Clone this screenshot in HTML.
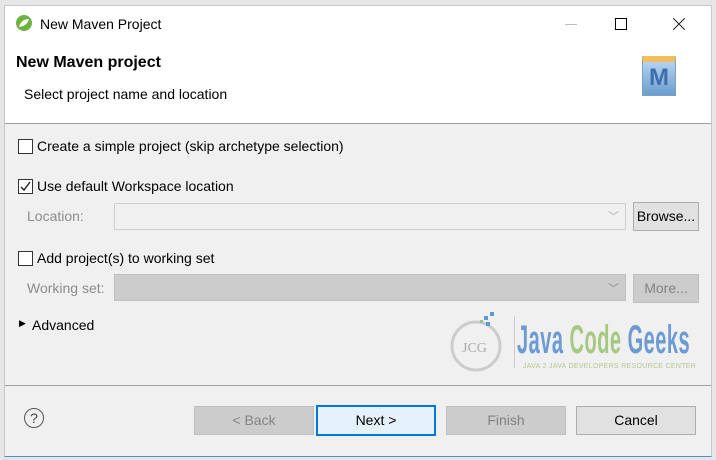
<!DOCTYPE html><html><head><style>
body{margin:0;width:716px;height:460px;background:#e6e6e6;position:relative;overflow:hidden;font-family:"Liberation Sans",sans-serif;font-size:14px;color:#000}
.win{position:absolute;left:4px;top:5px;width:706px;height:450px;background:#f0f0f0;border:1px solid #4a90d9;border-top-color:#c8c8c8;border-left-color:#c8c8c8;border-right-color:#c8c8c8}
.a{position:absolute}
.cb{position:absolute;width:13px;height:13px;border:1px solid #333;background:#fff}
.btn{position:absolute;height:27px;border:1px solid #adadad;background:#e1e1e1;text-align:center;line-height:27px;font-size:14px}
.dis{background:#ccc;border-color:#bfbfbf;color:#838383}
</style></head><body>
<div class="win">
<div class="a" style="left:0;top:0;width:706px;height:117px;background:#fff;border-bottom:1px solid #a0a0a0"></div>
<svg class="a" style="left:10px;top:8px" width="18" height="18"><circle cx="9" cy="9" r="8" fill="#6db33f"/><path d="M4 13 Q6 5 14 5 Q12 12 4 13Z" fill="#fff"/></svg>
<div class="a" style="left:35px;top:10px;font-size:14px">New Maven Project</div>
<div class="a" style="left:560px;top:18px;width:12px;height:1px;background:#bbb"></div>
<div class="a" style="left:610px;top:12px;width:10px;height:10px;border:1px solid #000"></div>
<svg class="a" style="left:668px;top:12px" width="12" height="12"><path d="M0 0L12 12M12 0L0 12" stroke="#222" stroke-width="1"/></svg>
<div class="a" style="left:11px;top:48px;font-size:16px;font-weight:bold">New Maven project</div>
<div class="a" style="left:19px;top:80px;font-size:14px">Select project name and location</div>
<div class="a" style="left:637px;top:50px;width:32px;height:33px;background:linear-gradient(#b4d3ef,#6a9dd0);border:1px solid #7e9fc4;border-top:6px solid #f2bd5c;color:#3e6fa8;font:bold 24px 'Liberation Sans';text-align:center;line-height:32px">M</div>
<div class="cb" style="left:13px;top:133px"></div>
<div class="a" style="left:32px;top:132px">Create a simple project (skip archetype selection)</div>
<div class="cb" style="left:13px;top:173px"></div>
<svg class="a" style="left:15px;top:175px" width="11" height="11"><path d="M1 6L4 9L10 1" stroke="#222" stroke-width="1.4" fill="none"/></svg>
<div class="a" style="left:32px;top:172px">Use default Workspace location</div>
<div class="a" style="left:22px;top:202px;color:#8c8c8c">Location:</div>
<div class="a" style="left:109px;top:197px;width:510px;height:25px;background:#f0f0f0;border:1px solid #d0d0d0"></div>
<div class="a" style="left:603px;top:202px;color:#aaa;font-size:11px">﹀</div>
<div class="btn" style="left:628px;top:196px;width:64px">Browse...</div>
<div class="cb" style="left:13px;top:245px"></div>
<div class="a" style="left:32px;top:244px">Add project(s) to working set</div>
<div class="a" style="left:22px;top:274px;color:#8c8c8c">Working set:</div>
<div class="a" style="left:109px;top:268px;width:510px;height:25px;background:#ccc;border:1px solid #c0c0c0"></div>
<div class="a" style="left:603px;top:274px;color:#888;font-size:11px">﹀</div>
<div class="btn dis" style="left:628px;top:268px;width:64px">More...</div>
<div class="a" style="left:14px;top:312px;font-size:9px">▶</div>
<div class="a" style="left:27px;top:311px">Advanced</div>
<svg class="a" style="left:443px;top:300px" width="60" height="70"><circle cx="28" cy="40" r="24" fill="none" stroke="#ccc" stroke-width="3"/><text x="14" y="46" font-size="14" fill="#aaa" font-family="Liberation Serif">JCG</text><rect x="36" y="10" width="4" height="4" fill="#5b9bd5"/><rect x="42" y="6" width="4" height="4" fill="#5b9bd5"/><rect x="38" y="16" width="4" height="4" fill="#5b9bd5"/><rect x="32" y="14" width="3" height="3" fill="#9bc28a"/></svg>
<div class="a" style="left:509px;top:310px;width:1px;height:52px;background:#ccc"></div>
<div class="a" style="left:512px;top:312px;font:bold 40px 'Liberation Sans';transform:scaleX(0.5);transform-origin:left;white-space:nowrap;letter-spacing:1px"><span style="color:#6c9ad2">Java </span><span style="color:#a5c882">Code </span><span style="color:#6c9ad2">Geeks</span></div>
<div class="a" style="left:518px;top:357px;font-size:7px;color:#b5c78f;letter-spacing:0.3px">JAVA 2 JAVA DEVELOPERS RESOURCE CENTER</div>
<div class="a" style="left:0;top:379px;width:706px;height:1px;background:#a0a0a0"></div>
<div class="a" style="left:19px;top:402px;width:18px;height:18px;border:1.5px solid #555;border-radius:50%;text-align:center;line-height:18px;font-size:14px;color:#444">?</div>
<div class="btn dis" style="left:189px;top:400px;width:118px">&lt; Back</div>
<div class="btn" style="left:311px;top:399px;width:116px;border:2px solid #0078d7;background:#e5f1fb">Next &gt;</div>
<div class="btn dis" style="left:441px;top:400px;width:118px">Finish</div>
<div class="btn" style="left:571px;top:400px;width:118px">Cancel</div>
</div>
</body></html>
